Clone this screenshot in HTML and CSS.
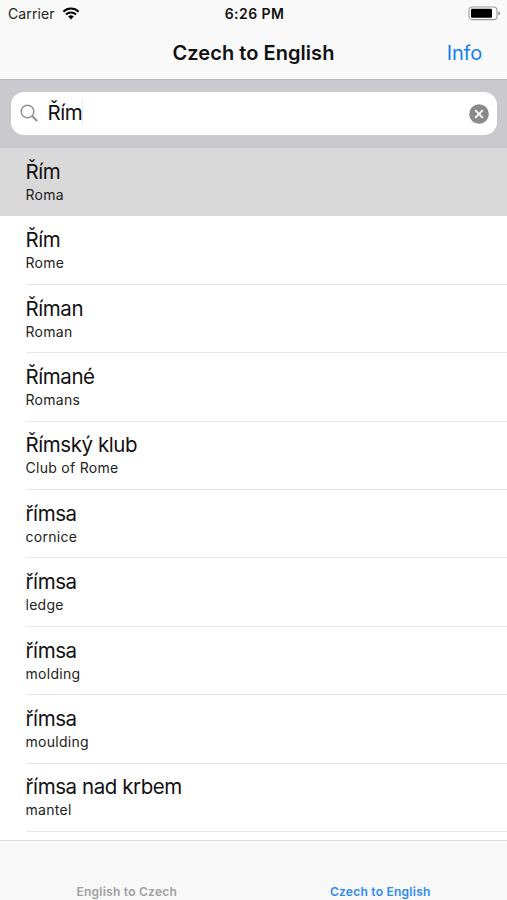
FILE: index.html
```html
<!DOCTYPE html>
<html lang="en">
<head>
    <meta charset="UTF-8">
    <meta name="viewport" content="width=device-width, initial-scale=1.0">
    <title>Czech to English</title>
    <link rel="stylesheet" href="styles.css">
</head>
<body>
    <div class="app">
        <header class="header">
            <div class="status-bar">
                <div class="carrier">
                    <span>Carrier</span>
                    <svg class="wifi" width="18" height="13" viewBox="0 0 18 13">
                        <path d="M1.4 4.7a10.8 10.8 0 0 1 15.2 0M4 7.5a7.1 7.1 0 0 1 10 0" fill="none" stroke="#000" stroke-width="2"/>
                        <path d="M9 12.4 6.2 9.6a4 4 0 0 1 5.6 0z"/>
                    </svg>
                </div>
                <span class="time">6:26 PM</span>
                <svg class="battery" width="33" height="15" viewBox="0 0 33 15">
                    <rect x="1" y="1" width="28" height="12.6" rx="3.4" fill="#fff" stroke="#999" stroke-width="1.1"/>
                    <rect x="3" y="2.8" width="21" height="9" rx="1"/>
                    <path d="M30.3 5.2q1.7.7 1.7 2.1t-1.7 2.1z" fill="#888"/>
                </svg>
            </div>
            <div class="nav-bar">
                <h1>Czech to English</h1>
                <a class="info">Info</a>
            </div>
        </header>

        <div class="search-bar">
            <div class="search-field">
                <svg class="search-icon" width="20" height="20" viewBox="0 0 20 20" fill="none" stroke="#8e8e93">
                    <circle cx="7.5" cy="7.5" r="6.3" stroke-width="1.4"/>
                    <path d="M12 12l5.2 5" stroke-width="2"/>
                </svg>
                <span class="query">Řím</span>
                <svg class="clear" width="20" height="20" viewBox="0 0 20 20">
                    <circle cx="10" cy="10" r="9.8" fill="#8a8a8c"/>
                    <path d="M6.2 6.2l7.6 7.6M13.8 6.2l-7.6 7.6" stroke="#fff" stroke-width="1.9"/>
                </svg>
            </div>
        </div>

        <ul class="results">
            <li class="selected"><div class="entry"><b>Řím</b><span>Roma</span></div></li>
            <li><div class="entry"><b>Řím</b><span>Rome</span></div></li>
            <li><div class="entry"><b>Říman</b><span>Roman</span></div></li>
            <li><div class="entry"><b>Římané</b><span>Romans</span></div></li>
            <li><div class="entry"><b>Římský klub</b><span>Club of Rome</span></div></li>
            <li><div class="entry"><b>římsa</b><span>cornice</span></div></li>
            <li><div class="entry"><b>římsa</b><span>ledge</span></div></li>
            <li><div class="entry"><b>římsa</b><span>molding</span></div></li>
            <li><div class="entry"><b>římsa</b><span>moulding</span></div></li>
            <li><div class="entry"><b>římsa nad krbem</b><span>mantel</span></div></li>
        </ul>

        <nav class="tab-bar">
            <a>English to Czech</a>
            <a class="active">Czech to English</a>
        </nav>
    </div>
</body>
</html>
```
FILE: styles.css
```css
body {
    margin: 0;
    background-color: #fff;
    color: #111;
    font-family: Inter, "Liberation Sans", sans-serif;
}
.app {
    display: flex;
    flex-direction: column;
    height: 900px;
    overflow: hidden;
}
.header {
    box-sizing: border-box;
    height: 79px;
    flex: none;
    background-color: #f9f9f9;
}
.status-bar {
    display: grid;
    grid-template-columns: 1fr auto 1fr;
    align-items: center;
    height: 27px;
    padding: 0 6px 0 8px;
    font-size: 14px;
}
.carrier {
    display: flex;
    align-items: center;
    gap: 7px;
    color: #222;
    letter-spacing: 0.1px;
}
.time {
    font-weight: 600;
    letter-spacing: 0.45px;
}
.battery {
    justify-self: end;
}
.nav-bar {
    display: grid;
    grid-template-columns: 1fr auto 1fr;
    align-items: center;
    height: 51px;
    padding: 0 25px;
}
.nav-bar h1 {
    grid-column: 2;
    margin: 0;
    font-size: 20px;
    font-weight: 600;
    letter-spacing: 0.05px;
}
.info {
    justify-self: end;
    color: #1180f5;
    font-size: 20px;
    letter-spacing: -0.2px;
}
.search-bar {
    box-sizing: border-box;
    height: 69px;
    flex: none;
    padding: 12px 10px 13px 11px;
    border-top: 1px solid #b9b9bc;
    background-color: #c9c9ce;
}
.search-field {
    display: flex;
    align-items: center;
    height: 43px;
    padding: 0 8px 0 9px;
    border-radius: 13px;
    background-color: #fff;
}
.query {
    margin: 0 auto 2px 7.5px;
    border-right: 1px solid #e9edf8;
    font-size: 20.5px;
    letter-spacing: -0.4px;
}
.results {
    flex: 1;
    margin: 0;
    padding: 0;
    list-style: none;
}
.results li {
    height: 68.4px;
    padding-left: 25.5px;
}
.results .selected {
    background-color: #d9d9d9;
}
.entry {
    box-sizing: border-box;
    height: 100%;
    padding-top: 10.8px;
    border-bottom: 1px solid #e6e6e8;
}
.selected .entry {
    border-color: #d9d9d9;
}
.entry b {
    display: block;
    font-size: 20.5px;
    font-weight: 400;
    line-height: 26px;
    letter-spacing: -0.43px;
}
.entry span {
    display: block;
    margin-top: 1px;
    color: #222;
    font-size: 14px;
    line-height: 18px;
    letter-spacing: 0.28px;
}
.tab-bar {
    box-sizing: border-box;
    display: flex;
    align-items: flex-end;
    height: 60px;
    flex: none;
    border-top: 1px solid #dedede;
    background-color: #f8f8f8;
}
.tab-bar a {
    flex: 1;
    color: #a0a0a0;
    font-size: 12px;
    font-weight: 600;
    line-height: 16px;
    letter-spacing: 0.25px;
    text-align: center;
}
.tab-bar .active {
    color: #2c8bf2;
}
```
